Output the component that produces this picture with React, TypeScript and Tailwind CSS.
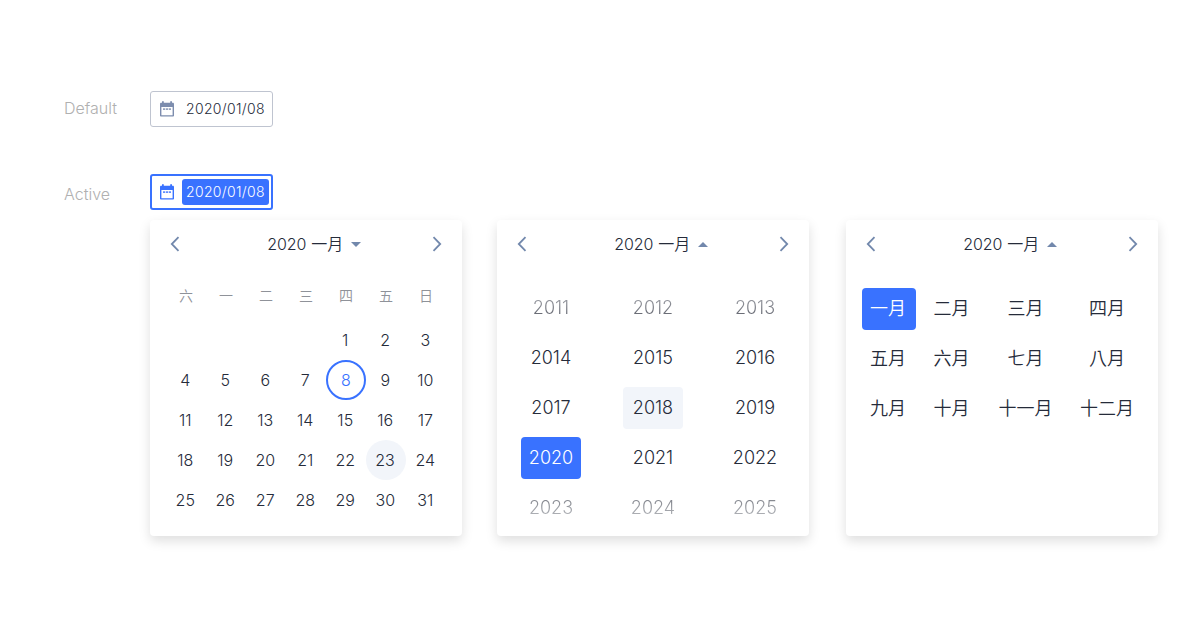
import type { ReactNode } from "react";

const weekdays = ["六", "一", "二", "三", "四", "五", "日"];
const days = Array.from({ length: 31 }, (_, i) => i + 1);
const years = Array.from({ length: 15 }, (_, i) => 2011 + i);
const months = ["一月", "二月", "三月", "四月", "五月", "六月", "七月", "八月", "九月", "十月", "十一月", "十二月"];

function CalendarIcon() {
  return (
    <svg width="16" height="16" viewBox="0 0 16 16" fill="currentColor" className="shrink-0">
      <path
        fillRule="evenodd"
        d="M3 .3h1.800v1.500h6.400V.3H13v1.500h.8c.7 0 1.200.5 1.200 1.200v11.400c0 .7-.5 1.200-1.200 1.200H2.200c-.7 0-1.200-.5-1.200-1.200V3c0-.7.5-1.200 1.200-1.200H3V.3zM2.400 6v8.200h11.200V6H2.400z"
      />
      <path opacity=".8" d="M4 7.200h2.200v1.700H4zM6.900 7.200h2.200v1.700H6.900zM9.800 7.200H12v1.700H9.800z" />
    </svg>
  );
}

function Chevron({ flip = false }: { flip?: boolean }) {
  return (
    <svg width="10" height="16" viewBox="0 0 10 16" fill="none" stroke="#7288ac" strokeWidth="1.800" className={flip ? "rotate-180" : ""}>
      <path d="M8.500 1.200 1.800 8l6.700 6.800" />
    </svg>
  );
}

function Panel({ open = false, children }: { open?: boolean; children: ReactNode }) {
  return (
    <section className="h-[316px] w-[312px] shrink-0 rounded bg-white shadow-[0_5px_12px_rgba(0,0,0,0.13)]">
      <header className="flex h-12 items-center justify-between px-5">
        <Chevron />
        <div className="flex items-center pl-4 text-[16px] leading-6">
          <span className="tracking-[-0.1px]">2020</span>
          <span className="ml-[5px]">一月</span>
          <svg width="10" height="5" viewBox="0 0 10 5" className={open ? "ml-[7.500px] rotate-180" : "ml-[7.500px]"}>
            <path d="M0 0h10L5 5z" fill="#7288ac" />
          </svg>
        </div>
        <Chevron flip />
      </header>
      {children}
    </section>
  );
}

export default function App() {
  return (
    <main className="h-[629px] w-[1196px] overflow-hidden bg-white pt-[91px] pl-16 font-['Inter','Noto_Sans_CJK_TC',sans-serif] font-[350] text-[#252b3a]">
      <div className="flex h-9 items-center">
        <div className="w-[86px] pb-0.5 text-[16px] text-[#b0b0b0]">Default</div>
        <div className="flex h-9 w-[123px] items-center rounded-[3px] border border-[#bfc4d0] pl-2 text-[#7d8dae]">
          <CalendarIcon />
          <span className="ml-[11px] pb-0.5 text-[14px] tracking-[0.32px] text-[#252b3a]">2020/01/08</span>
        </div>
      </div>
      <div className="mt-[47px] flex h-9 items-center">
        <div className="w-[86px] pt-1 text-[16px] text-[#b0b0b0]">Active</div>
        <div className="flex h-9 w-[123px] items-center rounded-[3px] border-2 border-[#3972ff] pl-[7px] text-[#3972ff]">
          <CalendarIcon />
          <span className="ml-[7px] flex h-[26px] w-[87px] items-center rounded-[3px] bg-[#3972ff] pb-0.5 pl-1 text-[14px] tracking-[0.32px] text-white">
            2020/01/08
          </span>
        </div>
      </div>
      <div className="mt-[10px] ml-[86px] flex">
        <Panel>
          <div className="grid grid-cols-7 px-4 pt-2 text-center text-[14px] text-[#8f9299]">
            {weekdays.map((d) => (
              <span key={d} className="h-10 leading-10">{d}</span>
            ))}
          </div>
          <div className="grid grid-cols-7 px-4 pt-1 text-[16px]">
            {days.map((d) => (
              <div
                key={d}
                className={`flex size-10 items-center justify-center rounded-full ${d === 1 ? "col-start-5" : ""} ${
                  d === 8 ? "border-2 border-[#3972ff] text-[#3972ff]" : d === 23 ? "bg-[#f2f5fa] pr-[2px]" : "pr-[1.500px]"
                }`}
              >
                {d}
              </div>
            ))}
          </div>
        </Panel>
        <div className="w-[35px]" />
        <Panel open>
          <div className="grid grid-cols-[60px_60px_60px] gap-x-[42px] gap-y-2 px-6 pt-[19px] text-[18px]">
            {years.map((y) => (
              <div
                key={y}
                className={`flex h-[42px] items-center justify-center rounded pb-px ${
                  y === 2020 ? "bg-[#3972ff] text-white" : y === 2018 ? "bg-[#f2f5fa]" : ""
                }`}
              >
                <span
                  className={
                    y < 2014
                      ? "bg-linear-to-b from-[#a8aab0] to-[#555862] bg-clip-text text-transparent"
                      : y > 2022
                        ? "bg-linear-to-b from-[#757880] to-[#c0c2c6] bg-clip-text text-transparent"
                        : ""
                  }
                >
                  {y}
                </span>
              </div>
            ))}
          </div>
        </Panel>
        <div className="w-[37px]" />
        <Panel open>
          <div className="grid grid-cols-[54px_54px_72px_72px] gap-x-[9.500px] gap-y-2 px-4 pt-5 text-[18px]">
            {months.map((m, i) => (
              <div
                key={m}
                className={`flex h-[42px] items-center justify-center rounded pb-px ${
                  i % 4 < 2 ? "pr-[2px]" : "pl-px"
                } ${i === 0 ? "bg-[#3972ff] text-white" : ""}`}
              >
                {m}
              </div>
            ))}
          </div>
        </Panel>
      </div>
    </main>
  );
}
